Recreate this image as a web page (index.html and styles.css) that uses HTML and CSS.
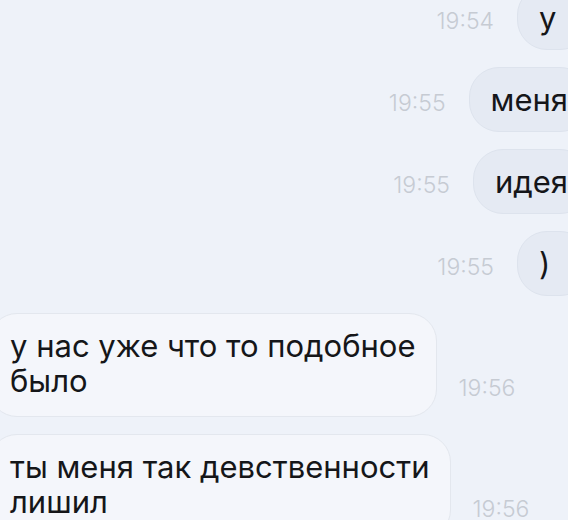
FILE: index.html
```html
<!DOCTYPE html>
<html lang="ru">
<head>
    <meta charset="UTF-8">
    <meta name="viewport" content="width=device-width, initial-scale=1.0">
    <title>Диалог</title>
    <link rel="stylesheet" href="styles.css">
</head>
<body>
    <div class="chat">
        <div class="row out first">
            <span class="time">19:54</span>
            <div class="bubble">у</div>
        </div>
        <div class="row out">
            <span class="time">19:55</span>
            <div class="bubble">меня</div>
        </div>
        <div class="row out">
            <span class="time">19:55</span>
            <div class="bubble">идея</div>
        </div>
        <div class="row out">
            <span class="time">19:55</span>
            <div class="bubble">)</div>
        </div>

        <div class="row in">
            <div class="bubble">у нас уже что то подобное<br>было</div>
            <span class="time">19:56</span>
        </div>
        <div class="row in">
            <div class="bubble">ты меня так девственности<br>лишил</div>
            <span class="time">19:56</span>
        </div>
    </div>
</body>
</html>
```

FILE: styles.css
```css
body {
    margin: 0;
    background-color: #eef2f9;
    font-family: 'Inter', 'Noto Sans', sans-serif;
    color: #151619;
    overflow: hidden;
}

.chat {
    display: flex;
    flex-direction: column;
    gap: 17px;
}

.row {
    display: flex;
}

.row.first {
    margin-top: -15px;
}

.row.out {
    justify-content: flex-end;
    align-items: center;
    gap: 23px;
}

.row.in {
    align-items: flex-end;
    gap: 22px;
}

.bubble {
    font-size: 31px;
    line-height: 35px;
    border-radius: 30px;
    white-space: nowrap;
}

.row.out .bubble {
    height: 65px;
    min-width: 73px;
    display: flex;
    align-items: center;
    padding: 0 21px;
    margin-right: -22px;
    background-color: #e5eaf3;
    border: 1px solid #dde3ed;
    box-sizing: border-box;
}

.row.in .bubble {
    margin-left: -11px;
    padding: 14px 20px 18px 20px;
    background-color: #f4f6fb;
    border: 1px solid #e3e7ee;
    border-radius: 28px;
}

.time {
    font-size: 23px;
    color: #c6cbd3;
    font-weight: 300;
}

.row.out .time {
    padding-top: 7px;
}

.row.in .time {
    margin-bottom: 15px;
}
```
